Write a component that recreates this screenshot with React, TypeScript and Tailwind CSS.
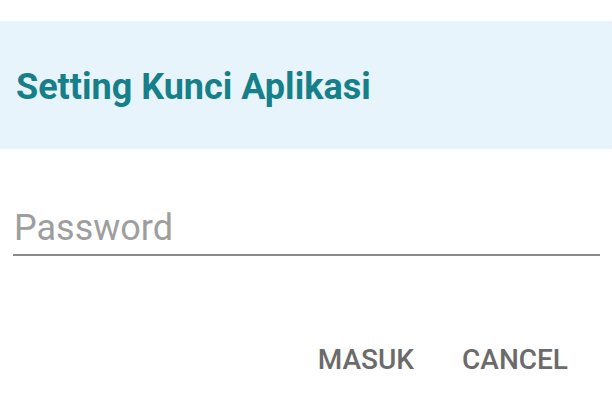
export default function App() {
  return (
    <div className="w-[612px] h-[413px] bg-white font-['Roboto',sans-serif] overflow-hidden">
      <div className="h-[21px]" />
      <div className="h-[128px] bg-[#e8f4fc] flex items-center pl-[16px] pt-[4px]">
        <h1 className="text-[36px] font-bold text-[#16808a]">
          Setting Kunci Aplikasi
        </h1>
      </div>
      <div className="px-[13px] pt-[52px]">
        <input
          type="password"
          placeholder="Password"
          className="w-[587px] h-[55px] pl-[1px] text-[36px] text-gray-700 placeholder:text-[#9e9e9e] border-b-2 border-[#8a8a8a] outline-none"
        />
      </div>
      <div className="flex justify-end gap-[48px] pr-[44px] pt-[83px]">
        <button className="text-[28px] font-medium text-[#6b6b6b]">MASUK</button>
        <button className="text-[28px] font-medium text-[#6b6b6b]">CANCEL</button>
      </div>
    </div>
  );
}
